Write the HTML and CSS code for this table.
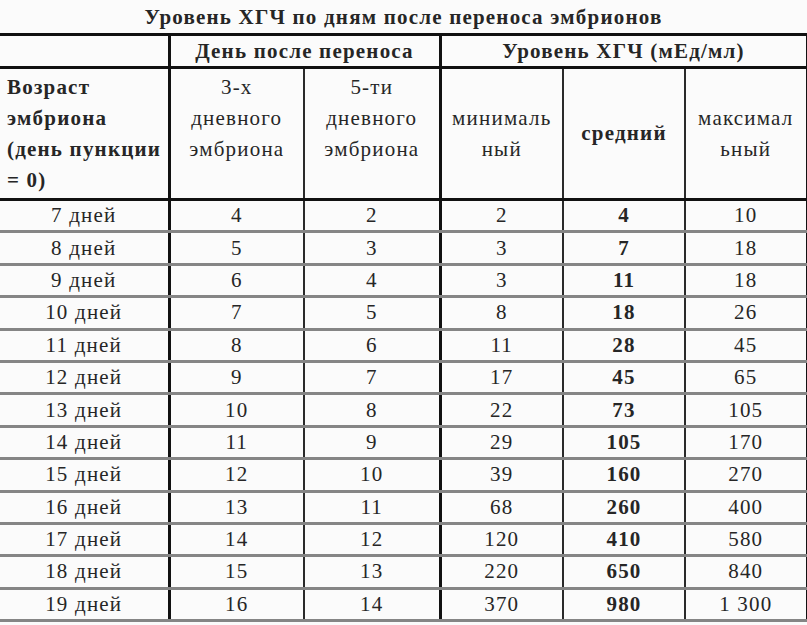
FILE: index.html
```html
<!DOCTYPE html>
<html lang="ru">
<head>
<meta charset="utf-8">
<title>Уровень ХГЧ</title>
<link rel="stylesheet" href="styles.css">
</head>
<body>
<div class="page">
  <div class="title">Уровень ХГЧ по дням после переноса эмбрионов</div>
  <table class="hcg">
    <colgroup>
      <col class="c1"><col class="c2"><col class="c3"><col class="c4"><col class="c5"><col class="c6">
    </colgroup>
    <thead>
      <tr class="h1">
        <th class="blank thick-r"></th>
        <th colspan="2" class="thick-r">День после переноса</th>
        <th colspan="3">Уровень ХГЧ (мЕд/мл)</th>
      </tr>
      <tr class="h2">
        <th class="age thick-r">Возраст<br>эмбриона<br>(день пункции<br>= 0)</th>
        <th class="top norm">3-х<br>дневного<br>эмбриона</th>
        <th class="top norm thick-r">5-ти<br>дневного<br>эмбриона</th>
        <th class="norm">минималь<br>ный</th>
        <th>средний</th>
        <th class="norm">максимал<br>ьный</th>
      </tr>
    </thead>
    <tbody>
      <tr><td class="thick-r">7 дней</td><td>4</td><td class="thick-r">2</td><td>2</td><td class="b">4</td><td>10</td></tr>
      <tr><td class="thick-r">8 дней</td><td>5</td><td class="thick-r">3</td><td>3</td><td class="b">7</td><td>18</td></tr>
      <tr><td class="thick-r">9 дней</td><td>6</td><td class="thick-r">4</td><td>3</td><td class="b">11</td><td>18</td></tr>
      <tr><td class="thick-r">10 дней</td><td>7</td><td class="thick-r">5</td><td>8</td><td class="b">18</td><td>26</td></tr>
      <tr><td class="thick-r">11 дней</td><td>8</td><td class="thick-r">6</td><td>11</td><td class="b">28</td><td>45</td></tr>
      <tr><td class="thick-r">12 дней</td><td>9</td><td class="thick-r">7</td><td>17</td><td class="b">45</td><td>65</td></tr>
      <tr><td class="thick-r">13 дней</td><td>10</td><td class="thick-r">8</td><td>22</td><td class="b">73</td><td>105</td></tr>
      <tr><td class="thick-r">14 дней</td><td>11</td><td class="thick-r">9</td><td>29</td><td class="b">105</td><td>170</td></tr>
      <tr><td class="thick-r">15 дней</td><td>12</td><td class="thick-r">10</td><td>39</td><td class="b">160</td><td>270</td></tr>
      <tr><td class="thick-r">16 дней</td><td>13</td><td class="thick-r">11</td><td>68</td><td class="b">260</td><td>400</td></tr>
      <tr><td class="thick-r">17 дней</td><td>14</td><td class="thick-r">12</td><td>120</td><td class="b">410</td><td>580</td></tr>
      <tr><td class="thick-r">18 дней</td><td>15</td><td class="thick-r">13</td><td>220</td><td class="b">650</td><td>840</td></tr>
      <tr><td class="thick-r">19 дней</td><td>16</td><td class="thick-r">14</td><td>370</td><td class="b">980</td><td>1&nbsp;300</td></tr>
    </tbody>
  </table>
</div>
</body>
</html>
```
FILE: styles.css
```css
html, body {
  margin: 0;
  padding: 0;
  background: #fbfbfb;
}
.page {
  width: 807px;
  height: 625px;
  overflow: hidden;
  font-family: "Liberation Serif", "Times New Roman", serif;
  color: #262626;
  letter-spacing: 1.2px;
}
.title {
  height: 33px;
  line-height: 35px;
  text-align: center;
  font-weight: bold;
  font-size: 21px;
}
.hcg {
  width: 807px;
  table-layout: fixed;
  border-collapse: collapse;
  font-size: 21px;
}
.c1 { width: 169px; }
.c2 { width: 135px; }
.c3 { width: 136px; }
.c4 { width: 123px; }
.c5 { width: 122px; }
.c6 { width: 122px; }

.hcg th, .hcg td {
  padding: 0;
  border-right: 2px solid #2a2a2a;
  border-bottom: 3px solid #858585;
  text-align: center;
  vertical-align: middle;
}
.hcg th {
  border-bottom: 3px solid #111;
  font-weight: bold;
}
.hcg tr > :last-child { border-right: 3px solid #111; }
.hcg .thick-r { border-right: 3px solid #111; }
.hcg thead tr.h1 th { border-top: 3px solid #111; }
.h1 th { height: 30px; }
.h2 th {
  height: 126px;
  line-height: 31px;
}
.h2 th.top { vertical-align: top; padding-top: 3px; }
.h2 th.norm { font-weight: normal; }
.h2 th.age {
  text-align: left;
  vertical-align: top;
  padding: 3px 0 0 7px;
}
.hcg td { height: 29.4px; }
.hcg td.b { font-weight: bold; }
```
